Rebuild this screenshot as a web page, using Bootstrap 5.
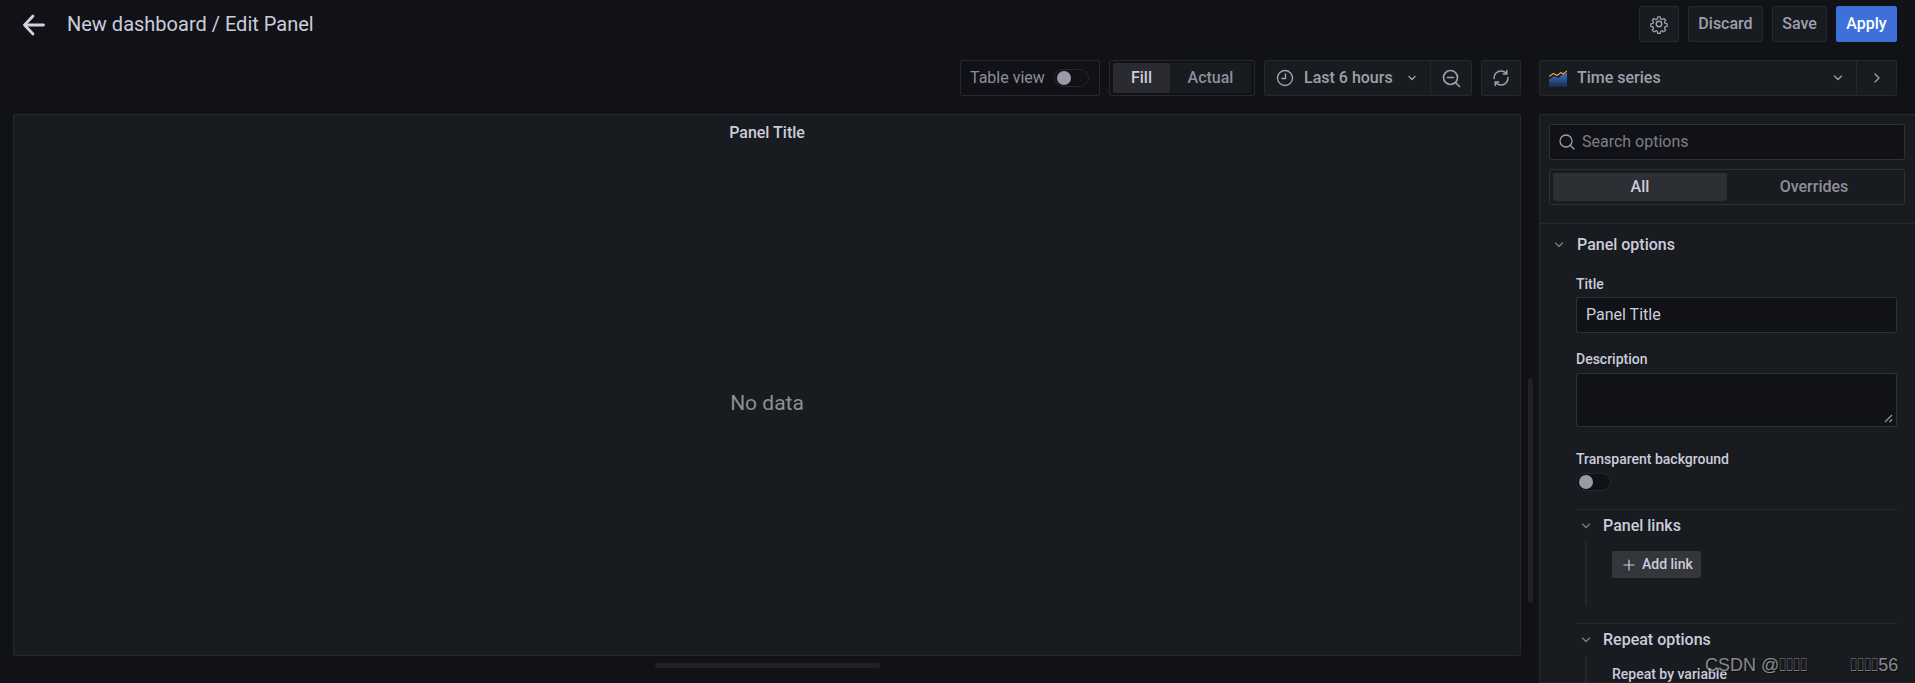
<!DOCTYPE html>
<html lang="en">
<head>
<meta charset="utf-8">
<title>Edit Panel</title>
<link href="https://cdn.jsdelivr.net/npm/bootstrap@5.3.0/dist/css/bootstrap.min.css" rel="stylesheet">
<style>
html,body{height:683px;overflow:hidden}
body{background:#111217;font-family:Roboto,"Liberation Sans",sans-serif;color:#ccccdc;font-size:16px;position:relative}
.topbar{height:47px;padding:6px 18px 0 22px}
.backlink{width:24px;height:24px;margin-top:6px;margin-right:21px}
.crumb{font-size:20px;line-height:24px;margin-top:-2px;color:#ccccdc}
.tbtn{height:36px;background:#181b1f;border:1px solid #26282d;border-radius:2px;color:#9fa0ab;font-weight:500;line-height:34px;text-align:center;white-space:nowrap}
.tbtn svg{display:block}
.w-gear{width:40px}.w-disc{width:75px}.w-save{width:55px}.w-appl{width:61px}
.ico{display:flex;align-items:center;justify-content:center}
.applybtn{background:#3d71d9;border-color:#3d71d9;color:#fff}
.gapa{gap:9px}
.row2{height:36px;margin-top:13px;padding-right:18px}
.tview{width:140px;margin-right:9px;height:36px;border:1px solid #26282d;border-radius:2px;padding:0 10px 0 9px;color:#8e8e9b;display:flex;align-items:center;justify-content:space-between}
.sw{width:35px;height:18px;border:1px solid #26282d;border-radius:9px;background:#111217;position:relative;display:block}
.sw i{position:absolute;left:2px;top:1px;width:14px;height:14px;border-radius:50%;background:#9a9aa8}
.radiog{width:146px;height:36px;border:1px solid #26282d;border-radius:2px;padding:2px 3px;margin-right:9px;display:flex}
.radiog span{flex:1;background:#181b1f;text-align:center;line-height:30px;color:#8e8e9b;font-weight:500}
.radiog .on{background:#292b31;color:#ccccdc;border-radius:2px;flex:0 0 57px}
.tgroup{width:208px;display:flex;height:36px;background:#181b1f;border:1px solid #26282d;border-radius:2px;margin-right:9px;color:#9fa0ab;font-weight:500}
.tgroup .tleft{flex:1;display:flex;align-items:center;padding-left:11px;border-right:1px solid #26282d}
.tgroup .tright{width:40px;display:flex;align-items:center;justify-content:center}
.refresh{width:40px;margin-right:18px}
.vizpick{width:358px;display:flex;height:36px;background:#181b1f;border:1px solid #26282d;border-radius:2px;color:#9fa0ab;font-weight:500}
.vizpick .vleft{flex:1;display:flex;align-items:center;padding-left:9px;border-right:1px solid #26282d}
.vizpick .vright{width:39px;display:flex;align-items:center;justify-content:center}
.lbl-t{margin-left:10px}
.chv-r{margin-left:auto;margin-right:13px}
.mainrow{padding-top:18px;height:600px}
.panelbox{width:1508px;margin-left:13px;height:542px;background:#181b1f;border:1px solid #26282d;border-radius:2px;flex:none;text-align:center}
.ptitle{font-weight:500;font-size:16px;line-height:20px;color:#ccccdc;padding-top:8px}
.nodata{font-size:21px;line-height:24px;color:#8e8e8e;margin-top:248px}
.sideb{position:absolute;left:1539px;top:114px;width:376px;height:569px;background:#181b1f;border:1px solid #26282d;border-right:0;overflow:hidden}
.srch{margin:9px 10px 0 9px;height:36px;background:#111217;border:1px solid #2e3036;border-radius:2px;display:flex;align-items:center;padding-left:9px;color:#7d7e89}
.srch svg{margin-right:7px}
.stabs{margin:9px 10px 0 9px;height:36px;border:1px solid #2e3036;border-radius:2px;padding:3px;display:flex}
.stabs span{flex:1;text-align:center;line-height:28px;color:#8e8e9b;font-weight:500}
.stabs .on{background:#2c2f34;color:#ccccdc;border-radius:2px;flex:0 0 174px}
.hr1{border-top:1px solid #26282d;margin-top:18px}
.sect{display:flex;align-items:center;height:19px;margin-top:11px;font-weight:500;color:#ccccdc}
.chev{width:37px;padding-left:14px;flex:none;display:flex}
.lab{font-size:14px;font-weight:500;line-height:16px;color:#ccccdc;padding-left:36px}
.inp{margin-left:36px;width:321px;background:#111217;border:1px solid #2e3036;border-radius:2px}
.l1{margin-top:22px}
.i1{margin-top:5px;height:36px;line-height:34px;padding-left:9px;color:#ccccdc}
.l2{margin-top:18px}
.i2{margin-top:6px;height:54px;position:relative}
.i2 svg{position:absolute;right:3px;bottom:3px}
.l3{margin-top:24px}
.sw2{margin:6px 0 0 36px}
.sub{margin-left:36px;width:321px;border-top:1px solid #26282d;margin-top:18px}
.subh{display:flex;align-items:center;height:19px;margin-top:6px;font-weight:500;color:#ccccdc}
.subh .c2{width:27px;padding-left:5px;display:flex;flex:none}
.subb{margin-left:9px;border-left:2px solid #26282d;margin-top:7px;height:63px;padding:9px 0 0 25px}
.addb{width:89px;height:27px;background:#33363b;border-radius:2px;color:#ccccdc;font-size:14px;font-weight:500;display:flex;align-items:center;padding-left:11px;gap:7px}
.lab3{font-size:14px;font-weight:500;color:#ccccdc;line-height:16px}
.subb2{margin-left:9px;border-left:2px solid #26282d;margin-top:8px;height:40px;padding:9px 0 0 25px}
.vscroll{position:absolute;left:1528px;top:378px;width:5px;height:225px;background:#1f2125;border-radius:2px}
.hscroll{position:absolute;left:655px;top:663px;width:225px;height:5px;background:#1f2125;border-radius:2px}
.wmark{position:absolute;left:1705px;top:653px;font-family:"Liberation Sans",sans-serif;font-size:18px;line-height:24px;color:rgba(255,255,255,.5);text-shadow:1px 1px 1px rgba(0,0,0,.6);white-space:pre}
.tofu{display:inline-block;width:28px;transform:scaleX(.52);transform-origin:0 50%}
.tofu2{margin-left:43px}
</style>
</head>
<body>
<div class="topbar d-flex justify-content-between">
  <div class="d-flex">
    <div class="backlink"><svg width="24" height="24" viewBox="0 0 24 24" fill="none" stroke="#d2d2de" stroke-width="2.800" stroke-linecap="round" stroke-linejoin="round"><path d="M21.500 12H3"/><path d="M11 3 2.500 12l8.500 9"/></svg></div>
    <div class="crumb pt-2">New dashboard / Edit Panel</div>
  </div>
  <div class="d-flex gapa">
    <div class="tbtn ico w-gear"><svg width="20" height="20" viewBox="0 0 24 24" fill="none" stroke="#a0a1ac" stroke-width="1.700" stroke-linejoin="round"><circle cx="12" cy="12" r="3.300"/><path d="M10.300 2.500h3.400l.6 2.900 1.800.8 2.500-1.600 2.400 2.400-1.600 2.500.8 1.800 2.800.6v3.400l-2.800.6-.8 1.800 1.600 2.500-2.400 2.400-2.500-1.600-1.800.8-.6 2.800h-3.400l-.6-2.800-1.800-.8-2.500 1.600-2.400-2.400 1.600-2.500-.8-1.800-2.800-.6v-3.400l2.800-.6.800-1.800-1.600-2.500 2.400-2.400 2.500 1.600 1.800-.8z" transform="translate(1.300 1.300) scale(.89)"/></svg></div>
    <div class="tbtn w-disc">Discard</div>
    <div class="tbtn w-save">Save</div>
    <div class="tbtn w-appl applybtn">Apply</div>
  </div>
</div>
<div class="row2 d-flex justify-content-end">
  <div class="tview"><span>Table view</span><span class="sw"><i></i></span></div>
  <div class="radiog"><span class="on">Fill</span><span>Actual</span></div>
  <div class="tgroup">
    <div class="tleft">
      <svg width="18" height="18" viewBox="0 0 18 18" fill="none" stroke="#9fa0ab" stroke-width="1.400" stroke-linecap="round"><circle cx="9" cy="9" r="7.500"/><path d="M9.500 5v4.500H6"/></svg>
      <span class="lbl-t">Last 6 hours</span>
      <svg class="chv-r" width="10" height="10" viewBox="0 0 10 10" fill="none" stroke="#9fa0ab" stroke-width="1.300" stroke-linecap="round" stroke-linejoin="round"><path d="M2 3.500 5 6.500l3-3"/></svg>
    </div>
    <div class="tright"><svg width="19" height="19" viewBox="0 0 19 19" fill="none" stroke="#9fa0ab" stroke-width="1.700" stroke-linecap="round"><circle cx="8.500" cy="8.500" r="7"/><path d="M5.500 8.500h6"/><path d="m13.500 13.500 4 4"/></svg></div>
  </div>
  <div class="tbtn ico refresh"><svg width="18" height="18" viewBox="0 0 18 18" fill="none" stroke="#9fa0ab" stroke-width="1.500" stroke-linecap="round" stroke-linejoin="round"><path d="M2 9.500A7 7 0 0 1 9.500 2 7 7 0 0 1 14.500 4.500"/><path d="M14.800 1.500v3.500h-3.500"/><path d="M16 8.500A7 7 0 0 1 8.500 16 7 7 0 0 1 3.500 13.500"/><path d="M3.200 16.500v-3.500h3.500"/></svg></div>
  <div class="vizpick">
    <div class="vleft">
      <svg width="18" height="18" viewBox="0 0 18 18"><defs><linearGradient id="vg" x1="0" y1="0" x2="0" y2="1"><stop offset="0" stop-color="#3d71d9"/><stop offset="1" stop-color="#1c2a47"/></linearGradient></defs><path d="M0 10.500 5 7l4 2 4-3 5-2v14H0z" fill="url(#vg)"/><path d="M0 7.500 4.500 4.500l3.500 2 4-3 2 1.500L18 2" fill="none" stroke="#e8a72c" stroke-width="1.200"/></svg>
      <span class="lbl-t">Time series</span>
      <svg class="chv-r" width="10" height="10" viewBox="0 0 10 10" fill="none" stroke="#9fa0ab" stroke-width="1.300" stroke-linecap="round" stroke-linejoin="round"><path d="M1.500 3 5 6.500 8.500 3"/></svg>
    </div>
    <div class="vright"><svg width="10" height="12" viewBox="0 0 10 12" fill="none" stroke="#9fa0ab" stroke-width="1.300" stroke-linecap="round" stroke-linejoin="round"><path d="M3 2l4 4-4 4"/></svg></div>
  </div>
</div>
<div class="mainrow d-flex">
  <div class="panelbox">
    <div class="ptitle">Panel Title</div>
    <div class="nodata">No data</div>
  </div>
</div>
<div class="vscroll"></div>
<div class="hscroll"></div>
<aside class="sideb">
  <div class="srch"><svg width="16" height="16" viewBox="0 0 16 16" fill="none" stroke="#9fa0ab" stroke-width="1.300" stroke-linecap="round"><circle cx="7" cy="7" r="6"/><path d="m11.500 11.500 3.500 3.500"/></svg>Search options</div>
  <div class="stabs"><span class="on">All</span><span>Overrides</span></div>
  <div class="hr1"></div>
  <div class="sect"><span class="chev"><svg width="10" height="10" viewBox="0 0 10 10" fill="none" stroke="#7d7e89" stroke-width="1.200" stroke-linecap="round" stroke-linejoin="round"><path d="M1.500 3 5 6.500 8.500 3"/></svg></span>Panel options</div>
  <div class="lab l1">Title</div>
  <div class="inp i1">Panel Title</div>
  <div class="lab l2">Description</div>
  <div class="inp i2"><svg width="9" height="9" viewBox="0 0 9 9" stroke="#9a9a9a" stroke-width="1.200"><path d="M1 8 8 1M5.500 8 8 5.500"/></svg></div>
  <div class="lab l3">Transparent background</div>
  <span class="sw sw2"><i></i></span>
  <div class="sub">
    <div class="subh"><span class="c2"><svg width="10" height="10" viewBox="0 0 10 10" fill="none" stroke="#7d7e89" stroke-width="1.200" stroke-linecap="round" stroke-linejoin="round"><path d="M1.500 3 5 6.500 8.500 3"/></svg></span>Panel links</div>
    <div class="subb"><div class="addb"><svg width="12" height="12" viewBox="0 0 12 12" stroke="#ccccdc" stroke-width="1.200" stroke-linecap="round"><path d="M6 1v10M1 6h10"/></svg>Add link</div></div>
  </div>
  <div class="sub">
    <div class="subh"><span class="c2"><svg width="10" height="10" viewBox="0 0 10 10" fill="none" stroke="#7d7e89" stroke-width="1.200" stroke-linecap="round" stroke-linejoin="round"><path d="M1.500 3 5 6.500 8.500 3"/></svg></span>Repeat options</div>
    <div class="subb2"><div class="lab3">Repeat by variable</div></div>
  </div>
</aside>
<div class="wmark">CSDN @<span class="tofu">&#xE000;&#xE000;&#xE000;&#xE000;</span><span class="tofu tofu2">&#xE000;&#xE000;&#xE000;&#xE000;</span>56</div>
<script src="https://cdn.jsdelivr.net/npm/bootstrap@5.3.0/dist/js/bootstrap.bundle.min.js"></script>
</body>
</html>
